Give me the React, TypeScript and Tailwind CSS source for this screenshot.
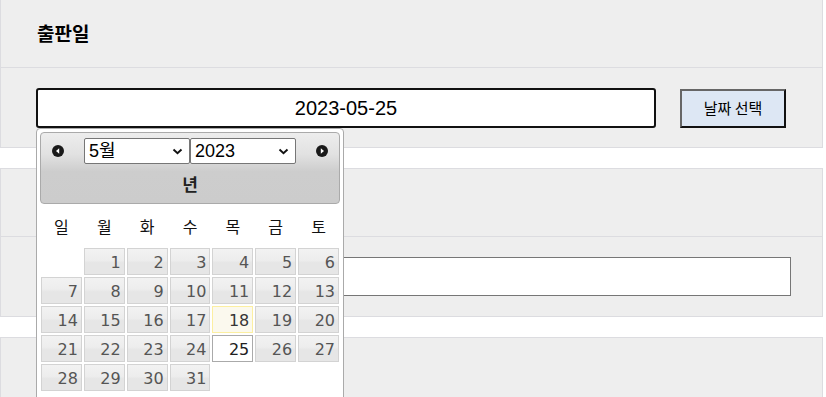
import React from "react";

const KR = "font-['Noto_Sans_CJK_KR','Noto_Sans',sans-serif]";

function Chevron() {
  return (
    <svg width="11" height="7" viewBox="0 0 11 7" className="shrink-0">
      <path d="M1.5 1.5 L5.5 5.2 L9.5 1.5" fill="none" stroke="#111" strokeWidth="1.9" />
    </svg>
  );
}

function FakeSelect({ label }: { label: string }) {
  return (
    <div className="flex h-[26px] w-[106px] shrink-0 items-center justify-between rounded-[2px] border border-[#767676] bg-white pl-[4px] pr-[6px]">
      <span className={`text-[18px] leading-none text-black font-['Liberation_Sans','Noto_Sans_CJK_KR',sans-serif]`}>{label}</span>
      <Chevron />
    </div>
  );
}

function CircleArrow({ dir }: { dir: "l" | "r" }) {
  return (
    <svg width="12" height="12" viewBox="0 0 12 12">
      <circle cx="6" cy="6" r="6" fill="#1a1a1a" />
      {dir === "l" ? (
        <path d="M4 6 L7.2 3.3 L7.2 8.7 Z" fill="#fff" />
      ) : (
        <path d="M8 6 L4.8 3.3 L4.8 8.7 Z" fill="#fff" />
      )}
    </svg>
  );
}

const days = [
  null, 1, 2, 3, 4, 5, 6,
  7, 8, 9, 10, 11, 12, 13,
  14, 15, 16, 17, 18, 19, 20,
  21, 22, 23, 24, 25, 26, 27,
  28, 29, 30, 31, null, null, null,
];

function DayCell({ d }: { d: number | null }) {
  if (d === null) return <div className="h-[27px]" />;
  let cls =
    "border-[#d3d3d3] text-[#555] bg-[linear-gradient(to_bottom,#f2f2f2_0%,#ededed_45%,#e6e6e6_55%,#e6e6e6_100%)]";
  if (d === 18) cls = "border-[#fcefa1] text-[#363636] bg-[#fbf9ee]";
  if (d === 25) cls = "border-[#aaaaaa] text-[#212121] bg-white";
  return (
    <div
      className={`flex h-[27px] items-center justify-end border pr-[3px] pt-[2px] text-[16px] leading-none font-['DejaVu_Sans',sans-serif] ${cls}`}
    >
      {d}
    </div>
  );
}

function Calendar() {
  const labels = ["일", "월", "화", "수", "목", "금", "토"];
  return (
    <div className="absolute left-[36px] top-[128px] z-10 w-[308px] rounded-t-[4px] border border-[#aaaaaa] bg-white p-[3px] pb-[12px]">
      <div className="h-[72px] rounded-[4px] border border-[#aaaaaa] bg-[linear-gradient(to_bottom,#ededed_0%,#e2e2e2_30%,#cdcdcd_55%,#cccccc_100%)]">
        <div className="flex h-[31px] items-end justify-between px-[11px]">
          <div className="flex h-[26px] items-center">
            <CircleArrow dir="l" />
          </div>
          <div className="flex">
            <FakeSelect label="5월" />
            <FakeSelect label="2023" />
          </div>
          <div className="flex h-[26px] items-center">
            <CircleArrow dir="r" />
          </div>
        </div>
        <div className={`flex h-[39px] items-center justify-center text-[17px] font-bold text-[#222] ${KR}`}>
          년
        </div>
      </div>
      <div className="grid h-[42px] grid-cols-7 gap-[2px] px-[1px] pt-[2px]">
        {labels.map((l) => (
          <div key={l} className={`flex items-center justify-center text-[16px] text-[#111] ${KR}`}>
            {l}
          </div>
        ))}
      </div>
      <div className="mt-[2px] grid grid-cols-7 gap-[2px] px-[1px]">
        {days.map((d, i) => (
          <DayCell key={i} d={d} />
        ))}
      </div>
    </div>
  );
}

function Section({
  title,
  first,
  children,
}: {
  title: string;
  first?: boolean;
  children?: React.ReactNode;
}) {
  return (
    <div className={`w-[823px] border border-[#dcdce0] bg-[#eeeeee] ${first ? "-mt-px" : "mt-[20px]"}`}>
      <div className="flex h-[68px] items-center border-b border-[#dcdce0] pl-[36px]">
        <span className={`text-[19px] font-bold text-black ${KR}`}>{title}</span>
      </div>
      <div className="flex h-[79px] items-center pl-[35px]">{children}</div>
    </div>
  );
}

export default function App() {
  return (
    <div className="relative h-[397px] w-[826px] overflow-hidden bg-white">
      <Section title="출판일" first>
        <div className="flex h-[40px] w-[620px] shrink-0 items-center justify-center rounded-[3px] border-2 border-[#111] bg-white">
          <span className="text-[20px] text-black font-['Liberation_Sans',sans-serif]">2023-05-25</span>
        </div>
        <button
          className={`ml-[24px] mt-[1px] flex h-[39px] w-[106px] shrink-0 items-center justify-center border-2 border-t-[#666] border-l-[#666] border-b-[#111] border-r-[#111] bg-[#dde7f4] text-[15px] text-black ${KR}`}
        >
          날짜 선택
        </button>
      </Section>
      <Section title="">
        <div className="h-[39px] w-[755px] shrink-0 border border-[#767676] bg-white" />
      </Section>
      <Section title="" />
      <Calendar />
    </div>
  );
}
